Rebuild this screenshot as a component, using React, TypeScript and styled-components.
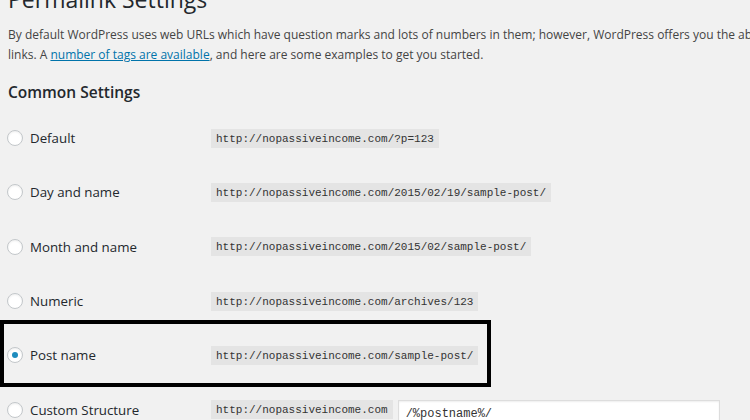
import React from 'react';
import styled, {createGlobalStyle} from 'styled-components';

const GlobalStyle = createGlobalStyle`
    html {
        overflow: hidden;
        background: #f1f1f1;
    }
    body {
        margin: 0;
        padding: 0;
        background: #f1f1f1;
        font-family: "Open Sans", "Liberation Sans", sans-serif;
        color: #23282d;
    }
`;

const StyledWrap = styled.div`
    box-sizing: border-box;
    width: 1100px;
    padding: 1px 8px 0;
`;

const StyledTitle = styled.h1`
    font-size: 23px;
    font-weight: 400;
    line-height: 30px;
    margin: -17px 0 0;
    color: #23282d;
`;

const StyledIntro = styled.p`
    font-size: 12px;
    line-height: 19.5px;
    color: #444;
    margin: 11px 0 0;
    white-space: nowrap;

    a {
        color: #0073aa;
        text-decoration: underline;
    }
`;

const StyledH2 = styled.h2`
    font-size: 15.5px;
    font-weight: 600;
    line-height: 20px;
    margin: 18px 0 0;
    color: #23282d;
`;

const StyledList = styled.div`
    margin-top: 9px;
    display: flex;
    flex-direction: column;
`;

const StyledRow = styled.div`
    position: relative;
    display: flex;
    align-items: center;
    height: 54.3px;
`;

const StyledLabel = styled.label`
    display: flex;
    align-items: center;
    gap: 7px;
    width: 203px;
    font-size: 13.3px;
    color: #23282d;
`;

const StyledRadio = styled.span<{checked: boolean}>`
    box-sizing: border-box;
    width: 16px;
    height: 16px;
    margin-left: -1px;
    border-radius: 50%;
    border: 1px solid #c3c7ca;
    background: #fff;
    box-shadow: inset 0 1px 2px rgba(0, 0, 0, .07);
    display: flex;
    align-items: center;
    justify-content: center;

    &::after {
        content: '';
        display: ${({checked}) => checked ? 'block' : 'none'};
        width: 6px;
        height: 6px;
        border-radius: 50%;
        background: #1e8cbe;
    }
`;

const StyledCode = styled.code`
    font-family: "Liberation Mono", "DejaVu Sans Mono", monospace;
    font-size: 11px;
    line-height: 14px;
    padding: 3px 5px 2px;
    background: #e4e4e4;
    color: #333;
`;

const StyledInput = styled.input`
    box-sizing: border-box;
    margin-left: 5px;
    margin-top: 9px;
    width: 322px;
    height: 28px;
    padding: 0 7px;
    border: 1px solid #ddd;
    background: #fff;
    box-shadow: inset 0 1px 2px rgba(0, 0, 0, .07);
    font-family: "Liberation Mono", "DejaVu Sans Mono", monospace;
    font-size: 12px;
    color: #333;
    outline: none;
`;

const StyledHighlight = styled.div`
    position: absolute;
    left: -8px;
    top: -8px;
    bottom: -5px;
    width: 491px;
    box-sizing: border-box;
    border: 4px solid #000;
    pointer-events: none;
`;

const options = [
    {label: 'Default', url: 'http://nopassiveincome.com/?p=123'},
    {label: 'Day and name', url: 'http://nopassiveincome.com/2015/02/19/sample-post/'},
    {label: 'Month and name', url: 'http://nopassiveincome.com/2015/02/sample-post/'},
    {label: 'Numeric', url: 'http://nopassiveincome.com/archives/123'},
    {label: 'Post name', url: 'http://nopassiveincome.com/sample-post/', checked: true},
];

const App: React.FC = () => {
    return (
        <StyledWrap>
            <GlobalStyle/>
            <StyledTitle>Permalink Settings</StyledTitle>
            <StyledIntro>
                By default WordPress uses web URLs which have question marks and lots of numbers in them; however, WordPress offers you the ability to create a custom URL structure for your permalinks and archives.
                <br/>
                links. A <a href="#">number of tags are available</a>, and here are some examples to get you started.
            </StyledIntro>
            <StyledH2>Common Settings</StyledH2>
            <StyledList>
                {options.map(({label, url, checked}) => (
                    <StyledRow key={label}>
                        <StyledLabel>
                            <StyledRadio checked={!!checked}/>
                            {label}
                        </StyledLabel>
                        <StyledCode>{url}</StyledCode>
                        {checked && <StyledHighlight/>}
                    </StyledRow>
                ))}
                <StyledRow>
                    <StyledLabel>
                        <StyledRadio checked={false}/>
                        Custom Structure
                    </StyledLabel>
                    <StyledCode>http://nopassiveincome.com</StyledCode>
                    <StyledInput defaultValue="/%postname%/"/>
                </StyledRow>
            </StyledList>
        </StyledWrap>
    );
};

export default App;
